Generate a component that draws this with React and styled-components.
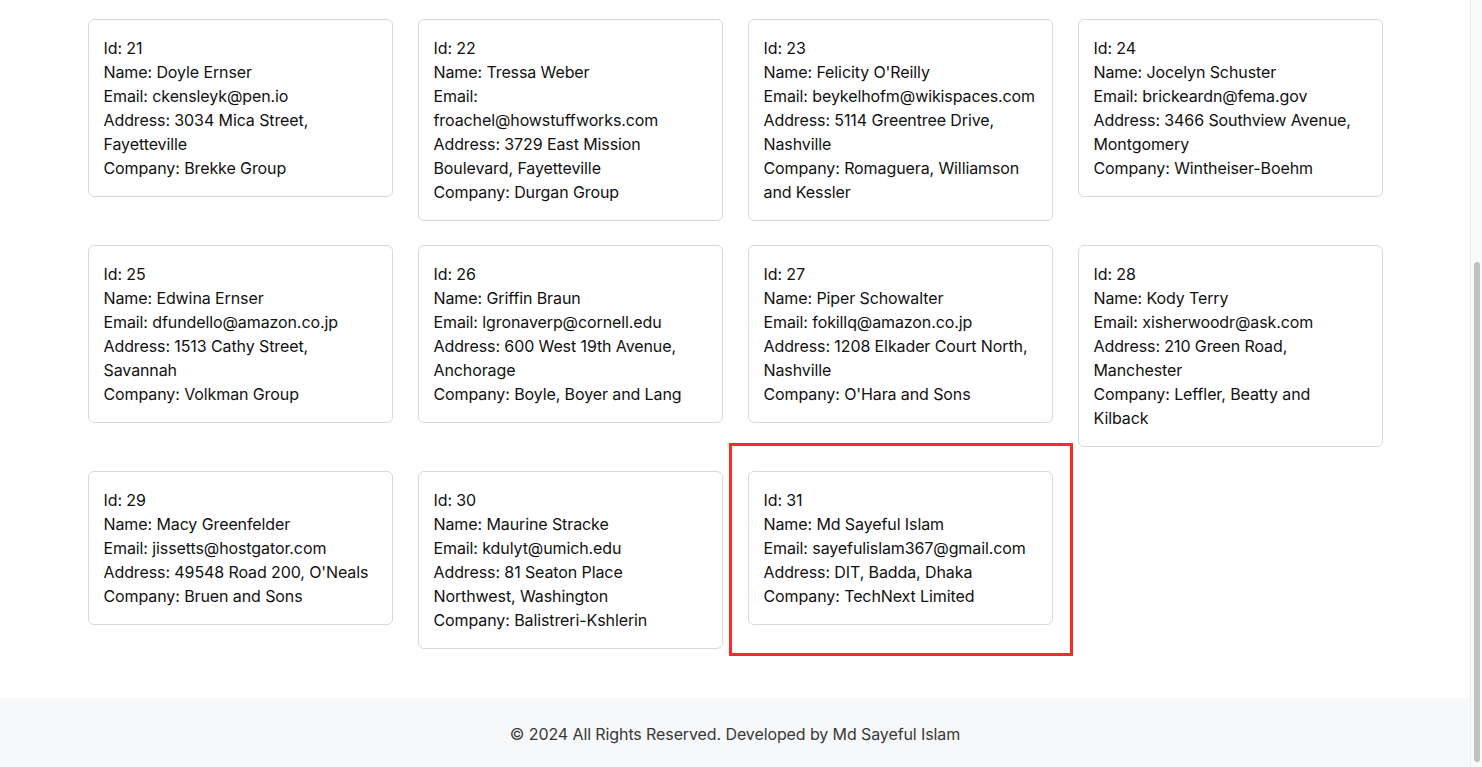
import React from "react";
import styled, { createGlobalStyle } from "styled-components";

const users = [
  { id: 21, name: "Doyle Ernser", email: "ckensleyk@pen.io", address: "3034 Mica Street, Fayetteville", company: "Brekke Group" },
  { id: 22, name: "Tressa Weber", email: "froachel@howstuffworks.com", address: "3729 East Mission Boulevard, Fayetteville", company: "Durgan Group" },
  { id: 23, name: "Felicity O'Reilly", email: "beykelhofm@wikispaces.com", address: "5114 Greentree Drive, Nashville", company: "Romaguera, Williamson and Kessler" },
  { id: 24, name: "Jocelyn Schuster", email: "brickeardn@fema.gov", address: "3466 Southview Avenue, Montgomery", company: "Wintheiser-Boehm" },
  { id: 25, name: "Edwina Ernser", email: "dfundello@amazon.co.jp", address: "1513 Cathy Street, Savannah", company: "Volkman Group" },
  { id: 26, name: "Griffin Braun", email: "lgronaverp@cornell.edu", address: "600 West 19th Avenue, Anchorage", company: "Boyle, Boyer and Lang" },
  { id: 27, name: "Piper Schowalter", email: "fokillq@amazon.co.jp", address: "1208 Elkader Court North, Nashville", company: "O'Hara and Sons" },
  { id: 28, name: "Kody Terry", email: "xisherwoodr@ask.com", address: "210 Green Road, Manchester", company: "Leffler, Beatty and Kilback" },
  { id: 29, name: "Macy Greenfelder", email: "jissetts@hostgator.com", address: "49548 Road 200, O'Neals", company: "Bruen and Sons" },
  { id: 30, name: "Maurine Stracke", email: "kdulyt@umich.edu", address: "81 Seaton Place Northwest, Washington", company: "Balistreri-Kshlerin" },
  { id: 31, name: "Md Sayeful Islam", email: "sayefulislam367@gmail.com", address: "DIT, Badda, Dhaka", company: "TechNext Limited", highlight: true },
];

const App = () => {
  return (
    <Layout>
      <GlobalStyle />
      <Page>
        <Main>
          <Grid>
            {users.map((user) => (
              <Card key={user.id} $highlight={user.highlight}>
                <p>Id: {user.id}</p>
                <p>Name: {user.name}</p>
                <p>Email: {user.email}</p>
                <p>Address: {user.address}</p>
                <p>Company: {user.company}</p>
              </Card>
            ))}
          </Grid>
        </Main>
        <Footer>© 2024 All Rights Reserved. Developed by Md Sayeful Islam</Footer>
      </Page>
      <ScrollTrack>
        <ScrollThumb />
      </ScrollTrack>
    </Layout>
  );
};

export default App;

//GLOBAL

const GlobalStyle = createGlobalStyle`
  body {
    margin: 0;
    background: #fff;
    font-family: Inter, "Noto Sans", "Liberation Sans", sans-serif;
    color: #111;
    overflow: hidden;
  }

  p {
    margin: 0;
  }
`;

const Layout = styled.div`
  display: flex;
  height: 767px;
`;

const Page = styled.div`
  flex: 1;
  display: flex;
  flex-direction: column;
`;

const Main = styled.main`
  padding: 19px 0 49px;
`;

const Grid = styled.div`
  width: 1295px;
  margin: 0 auto;
  display: grid;
  grid-template-columns: repeat(4, 1fr);
  gap: 24px 25px;
  align-items: start;
`;

const Card = styled.div`
  position: relative;
  border: 1px solid #d9d9d9;
  border-radius: 6px;
  padding: 16px 16px 16px 15px;
  font-size: 16px;
  line-height: 24px;
  letter-spacing: -0.1px;

  ${({ $highlight }) =>
    $highlight &&
    `
    &::after {
      content: "";
      position: absolute;
      top: -29px;
      left: -20px;
      right: -21px;
      bottom: -32px;
      border: 3px solid #ff2a26;
      pointer-events: none;
    }
  `}
`;

const Footer = styled.footer`
  background: #f7f8fa;
  padding: 24px 0 22px;
  text-align: center;
  font-size: 16px;
  line-height: 24px;
  letter-spacing: -0.1px;
  color: #383838;
`;

// fake browser scrollbar, the page in the shot is scrolled to the bottom
const ScrollTrack = styled.div`
  position: relative;
  width: 11px;
  background: #fafafa;
  border-left: 1px solid #ebebeb;
`;

const ScrollThumb = styled.div`
  position: absolute;
  top: 262px;
  left: 3px;
  width: 6px;
  height: 500px;
  border-radius: 3px;
  background: #c1c1c1;
`;
